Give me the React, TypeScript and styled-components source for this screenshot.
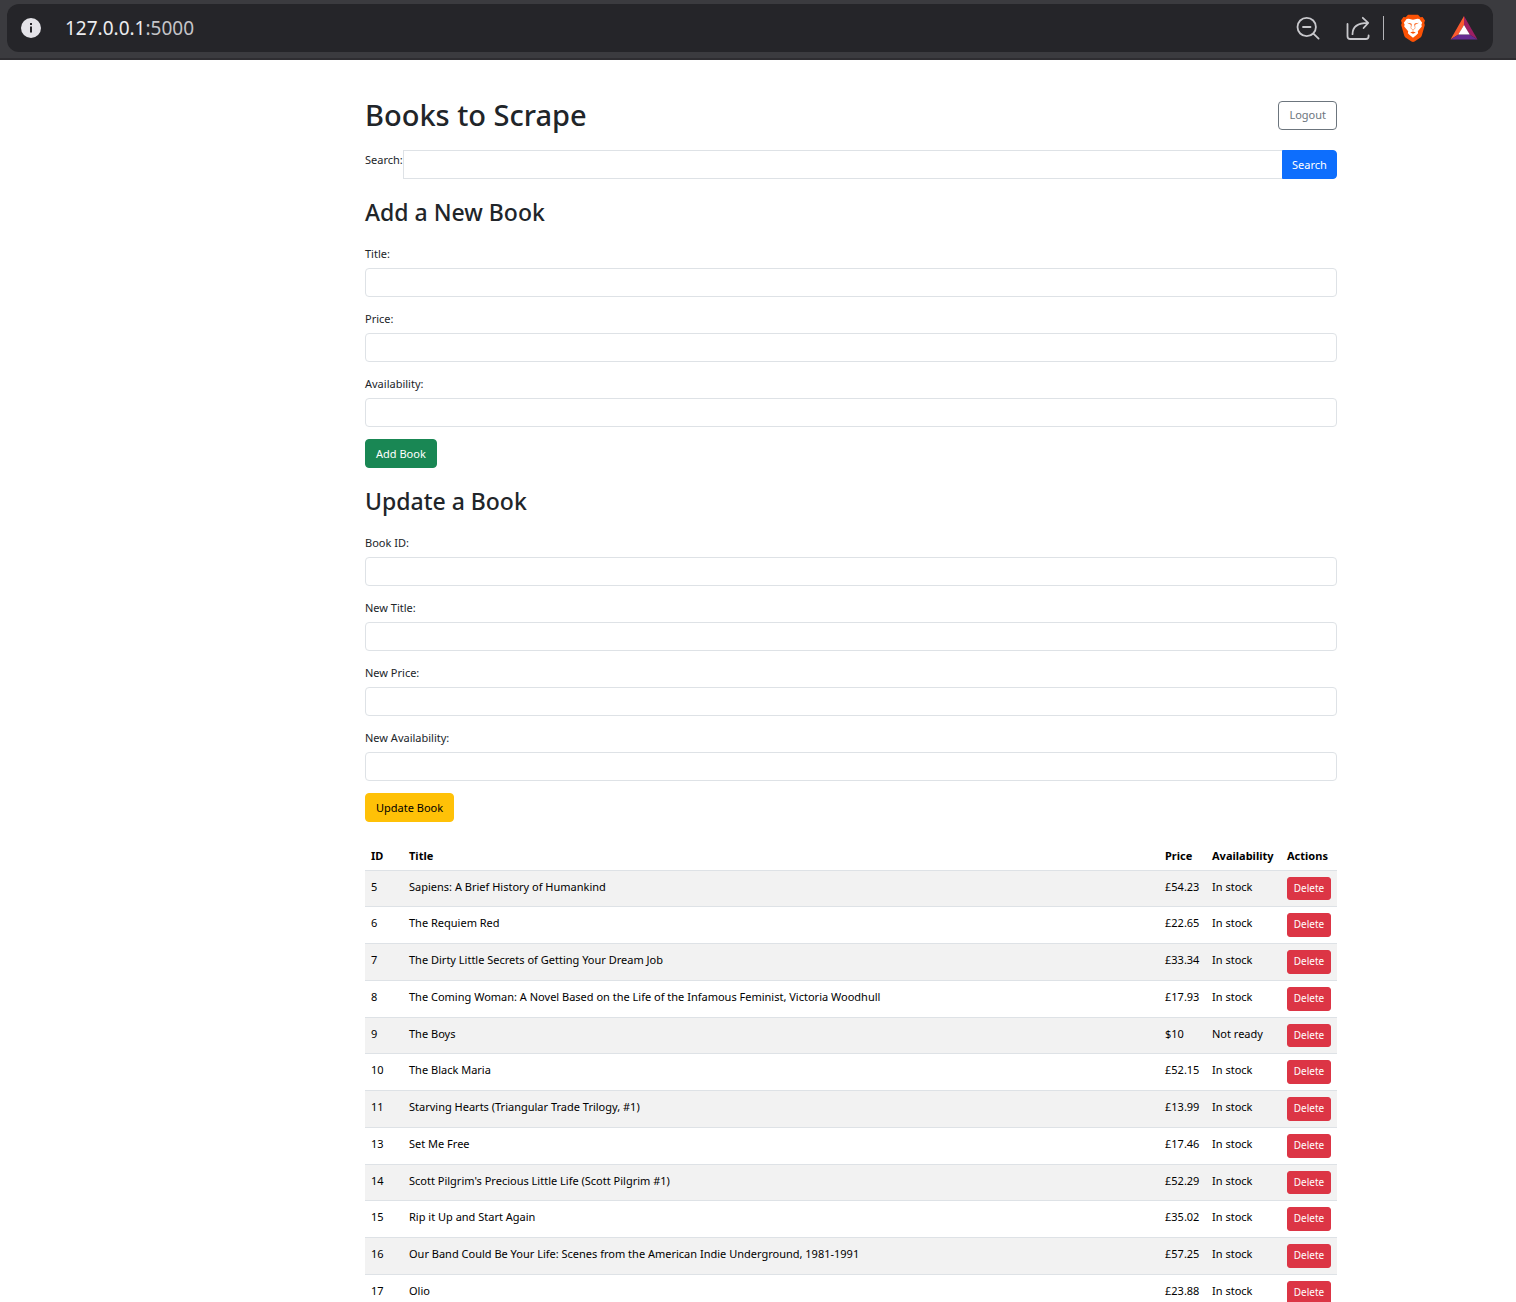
import React from "react";
import styled, { createGlobalStyle, css } from "styled-components";

const GlobalStyle = createGlobalStyle`
  *, *::before, *::after { box-sizing: border-box; }
  body {
    margin: 0;
    background: #fff;
    color: #212529;
    font-family: "Noto Sans", "Open Sans", sans-serif;
    font-size: 11px;
    line-height: 20px;
  }
  input, button { font: inherit; }
`;

const BrowserBar = styled.header`
  display: flex;
  height: 60px;
  padding: 4px 23px 6px 7px;
  background: #3b3b3f;
  border-bottom: 2px solid #2e2d31;
`;

const AddressBar = styled.div`
  flex: 1;
  display: flex;
  align-items: center;
  height: 48px;
  padding: 0 15px 0 13px;
  background: #252529;
  border-radius: 12px;
`;

const Address = styled.span`
  flex: 1;
  margin-left: 23px;
  color: #c4c4c8;
  font-size: 19px;
  line-height: 28px;
`;

const Host = styled.span`
  color: #ececef;
`;

const IconButton = styled.button`
  display: flex;
  padding: 0;
  border: 0;
  background: none;
  cursor: pointer;
`;

const BarTools = styled.div`
  display: flex;
  align-items: center;
  gap: 24px;
`;

const BraveTools = styled(BarTools)`
  height: 24px;
  margin-left: 12px;
  padding-left: 16px;
  border-left: 1px solid #b4b4b8;
`;

const Page = styled.main`
  display: grid;
  grid-template-columns: 365fr minmax(0, 972px) 179fr;
  height: calc(100vh - 60px);
  overflow: hidden;
`;

const Container = styled.div`
  grid-column: 2;
  padding-top: 36px;
`;

const TitleRow = styled.div`
  display: flex;
  align-items: center;
  justify-content: space-between;
  margin-bottom: 16px;
`;

const PageTitle = styled.h1`
  margin: 0;
  font-size: 29px;
  line-height: 38px;
  font-weight: 500;
`;

const SectionTitle = styled.h2`
  margin: 18px 0 16px;
  font-size: 23px;
  line-height: 31px;
  font-weight: 500;
`;

type Tone = "primary" | "success" | "warning" | "danger" | "outline";

const tones = {
  primary: css`background: #0d6efd; border-color: #0d6efd; color: #fff;`,
  success: css`background: #198754; border-color: #198754; color: #fff;`,
  warning: css`background: #ffc107; border-color: #ffc107; color: #000;`,
  danger: css`background: #dc3545; border-color: #dc3545; color: #fff;`,
  outline: css`background: #fff; border-color: #6c757d; color: #6c757d;`,
};

const Button = styled.button<{ $tone: Tone }>`
  display: block;
  height: 29px;
  padding: 0 10px;
  border: 1px solid;
  border-radius: 4px;
  line-height: 18px;
  cursor: pointer;
  ${({ $tone }) => tones[$tone]}
`;

const SearchButton = styled(Button)`
  width: 55px;
  padding: 0;
  border-radius: 0 4px 4px 0;
`;

const DeleteButton = styled(Button)`
  width: 100%;
  height: 24px;
  padding: 0 0 2px;
  border-radius: 3px;
  font-size: 10px;
`;

const SearchForm = styled.form`
  display: flex;
`;

const Label = styled.label`
  display: block;
  margin-bottom: 4px;
`;

const Input = styled.input`
  display: block;
  width: 100%;
  height: 29px;
  padding: 4px 9px;
  border: 1px solid #dee2e6;
  border-radius: 4px;
  background: #fff;
  color: #212529;
`;

const SearchInput = styled(Input)`
  flex: 1;
  width: auto;
  min-width: 0;
  border-right: 0;
  border-radius: 0;
`;

const Field = styled.div`
  margin-bottom: 12px;
`;

const BookTable = styled.table`
  width: 100%;
  margin-top: 18px;
  table-layout: fixed;
  border-collapse: separate;
  border-spacing: 0;
  color: #000;
`;

const HeadCell = styled.th<{ $width?: number }>`
  width: ${({ $width }) => ($width ? `${$width}px` : "auto")};
  padding: 6px 6px 4px;
  border-bottom: 1px solid #dee2e6;
  text-align: left;
  font-weight: 700;
`;

const Cell = styled.td`
  padding: 6px;
  border-bottom: 1px solid #dee2e6;
  vertical-align: top;
`;

const BookRow = styled.tr`
  &:nth-child(odd) ${Cell} { background: #f2f2f2; }
  &:nth-child(4n + 1) ${DeleteButton} { height: 23px; }
`;

const newBookFields = [
  ["title", "Title:"],
  ["price", "Price:"],
  ["availability", "Availability:"],
];

const updateFields = [
  ["book-id", "Book ID:"],
  ["new-title", "New Title:"],
  ["new-price", "New Price:"],
  ["new-availability", "New Availability:"],
];

const books: [number, string, string, string][] = [
  [5, "Sapiens: A Brief History of Humankind", "£54.23", "In stock"],
  [6, "The Requiem Red", "£22.65", "In stock"],
  [7, "The Dirty Little Secrets of Getting Your Dream Job", "£33.34", "In stock"],
  [8, "The Coming Woman: A Novel Based on the Life of the Infamous Feminist, Victoria Woodhull", "£17.93", "In stock"],
  [9, "The Boys", "$10", "Not ready"],
  [10, "The Black Maria", "£52.15", "In stock"],
  [11, "Starving Hearts (Triangular Trade Trilogy, #1)", "£13.99", "In stock"],
  [13, "Set Me Free", "£17.46", "In stock"],
  [14, "Scott Pilgrim's Precious Little Life (Scott Pilgrim #1)", "£52.29", "In stock"],
  [15, "Rip it Up and Start Again", "£35.02", "In stock"],
  [16, "Our Band Could Be Your Life: Scenes from the American Indie Underground, 1981-1991", "£57.25", "In stock"],
  [17, "Olio", "£23.88", "In stock"],
];

function InfoIcon() {
  return (
    <svg width="22" height="22" viewBox="0 0 22 22">
      <circle cx="11" cy="11" r="10" fill="#e4e3e8" />
      <rect x="10" y="9.5" width="2" height="6" fill="#252529" />
      <rect x="10" y="6" width="2" height="2" fill="#252529" />
    </svg>
  );
}

function ZoomOutIcon() {
  return (
    <svg width="26" height="26" viewBox="0 0 26 26" fill="none" stroke="#c8c8cc" strokeWidth="1.8" strokeLinecap="round">
      <circle cx="11.7" cy="12" r="9.2" />
      <path d="M8 12h7.5M18.4 18.6l5.2 5" />
    </svg>
  );
}

function ShareIcon() {
  return (
    <svg width="26" height="26" viewBox="0 0 26 26" fill="none" stroke="#c8c8cc" strokeWidth="1.8" strokeLinecap="round" strokeLinejoin="round">
      <path d="M2.5 9v12.2a2.8 2.8 0 0 0 2.8 2.8h15.5a2.8 2.8 0 0 0 2.8-2.8V20.5" />
      <path d="M7.5 19.2C7.5 12 12.500 7.8 23 7.8M17.8 2.8l5.4 5-4.6 5.2" />
    </svg>
  );
}

function BraveIcon() {
  return (
    <svg width="26" height="28" viewBox="0 0 26 28">
      <path d="M8 .7h10l2.300 2.500 2.300-.2 2.400 3.500-.8 2.400.6 2.200-3 10.300c-.4 1.200-1 1.900-2 2.600L14.500 27.500c-1 .6-2 .6-3 0L6.200 24c-1-.7-1.600-1.400-2-2.600l-3-10.300.6-2.200L1 6.500 3.400 3l2.300.2z" fill="#fb5205" />
      <path d="M8.600 4.800l4.400.9 4.400-.9 2 .3 2.800 3.700-.8 1.700.4 1.900-4 4.900.3 1.900-1.700 1.700-3.400 2.900-3.400-2.900-1.700-1.700.3-1.900-4-4.900.4-1.900-.8-1.700 2.800-3.700z" fill="#fff" />
      <path d="M7 8.800l4.200.6.5 1.200-.6 3.200.9 1.600h2l.9-1.600-.6-3.200.5-1.200 4.200-.6-3.900 2 .2 3.400-1.500 1.600-.8 1-.8-1-1.500-1.600.2-3.400zM10.200 18.500l2.800-1.100 2.800 1.100-2.800 1.300z" fill="#fb5205" />
    </svg>
  );
}

function RewardsIcon() {
  return (
    <svg width="28" height="26" viewBox="0 0 28 26">
      <path d="M14 1L.5 24.500 8.500 19.500 14 10z" fill="#fb5a2e" />
      <path d="M14 1l13.500 23.500-8-5L14 10z" fill="#9e1f63" />
      <path d="M.5 24.500h27l-8-5h-11z" fill="#662d91" />
      <path d="M14 10l5.700 9.600H8.300z" fill="#fff" />
    </svg>
  );
}

function FormField({ id, label }: { id: string; label: string }) {
  return (
    <Field>
      <Label htmlFor={id}>{label}</Label>
      <Input id={id} name={id} type="text" />
    </Field>
  );
}

const stay = (event: React.FormEvent) => event.preventDefault();

export default function App() {
  return (
    <>
      <GlobalStyle />
      <BrowserBar>
        <AddressBar>
          <IconButton type="button" aria-label="Site information"><InfoIcon /></IconButton>
          <Address><Host>127.0.0.1</Host>:5000</Address>
          <BarTools>
            <IconButton type="button" aria-label="Zoom"><ZoomOutIcon /></IconButton>
            <IconButton type="button" aria-label="Share"><ShareIcon /></IconButton>
          </BarTools>
          <BraveTools>
            <IconButton type="button" aria-label="Shields"><BraveIcon /></IconButton>
            <IconButton type="button" aria-label="Rewards"><RewardsIcon /></IconButton>
          </BraveTools>
        </AddressBar>
      </BrowserBar>
      <Page>
        <Container>
          <TitleRow>
            <PageTitle>Books to Scrape</PageTitle>
            <Button type="button" $tone="outline">Logout</Button>
          </TitleRow>
          <SearchForm onSubmit={stay}>
            <Label htmlFor="search">Search:</Label>
            <SearchInput id="search" name="search" type="text" />
            <SearchButton type="submit" $tone="primary">Search</SearchButton>
          </SearchForm>

          <SectionTitle>Add a New Book</SectionTitle>
          <form onSubmit={stay}>
            {newBookFields.map(([id, label]) => <FormField key={id} id={id} label={label} />)}
            <Button type="submit" $tone="success">Add Book</Button>
          </form>

          <SectionTitle>Update a Book</SectionTitle>
          <form onSubmit={stay}>
            {updateFields.map(([id, label]) => <FormField key={id} id={id} label={label} />)}
            <Button type="submit" $tone="warning">Update Book</Button>
          </form>

          <BookTable>
            <thead>
              <tr>
                <HeadCell $width={38}>ID</HeadCell>
                <HeadCell>Title</HeadCell>
                <HeadCell $width={47}>Price</HeadCell>
                <HeadCell $width={75}>Availability</HeadCell>
                <HeadCell $width={56}>Actions</HeadCell>
              </tr>
            </thead>
            <tbody>
              {books.map(([id, title, price, availability]) => (
                <BookRow key={id}>
                  <Cell>{id}</Cell>
                  <Cell>{title}</Cell>
                  <Cell>{price}</Cell>
                  <Cell>{availability}</Cell>
                  <Cell><DeleteButton type="button" $tone="danger">Delete</DeleteButton></Cell>
                </BookRow>
              ))}
            </tbody>
          </BookTable>
        </Container>
      </Page>
    </>
  );
}
